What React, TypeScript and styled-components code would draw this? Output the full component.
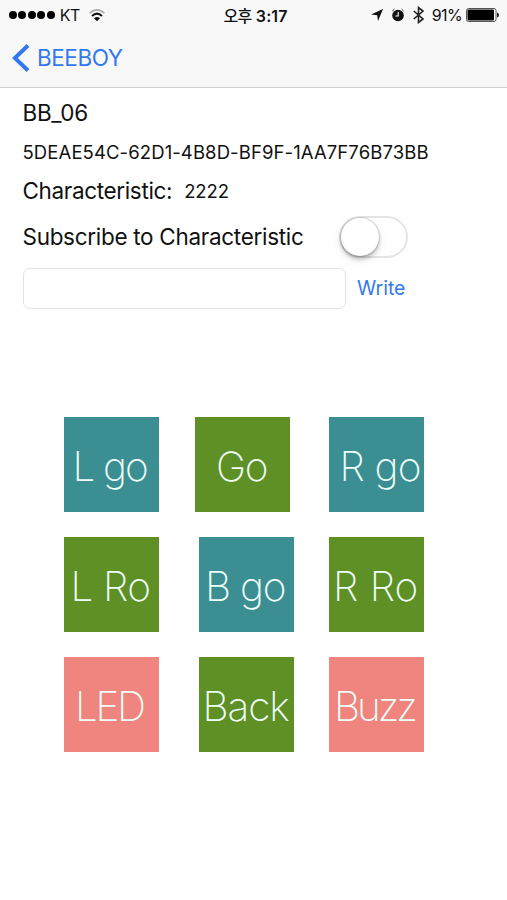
import React from 'react';
import styled, { createGlobalStyle } from 'styled-components';

const Global = createGlobalStyle`
  * { box-sizing: border-box; }
  body { margin: 0; background: #fff; font-family: Inter, "Noto Sans CJK KR", sans-serif; color: #111; }
`;
const Screen = styled.div`
  width: 507px;
  height: 900px;
  background: #fff;
  overflow: hidden;
`;
const Header = styled.header`
  height: 88px;
  background: #f8f8f8;
  border-bottom: 1px solid #cfcfcf;
`;
const StatusBar = styled.div`
  height: 30px;
  padding: 0 8px 0 9px;
  display: grid;
  grid-template-columns: 1fr auto 1fr;
  align-items: center;
  font-size: 16px;
`;
const StatusGroup = styled.div<{ $end?: boolean }>`
  display: flex;
  align-items: center;
  justify-content: ${p => (p.$end ? 'flex-end' : 'flex-start')};
`;
const Dots = styled.div`
  display: flex;
  gap: 1.6px;
  margin-right: 5px;
`;
const Dot = styled.span`
  width: 7.9px;
  height: 7.9px;
  border-radius: 50%;
  background: #000;
`;
const Carrier = styled.span`
  letter-spacing: -0.5px;
  margin-right: 9px;
`;
const Clock = styled.div`
  font-weight: 600;
  letter-spacing: 0.1px;
  margin-left: 3px;
  white-space: nowrap;
`;
const Korean = styled.span`
  font-size: 16px;
  font-weight: 500;
  letter-spacing: -0.6px;
`;
const Battery = styled.span`
  letter-spacing: -0.6px;
  margin: 0 4px 0 8px;
`;
const Icon = styled.svg<{ $gap?: number }>`
  display: block;
  flex: none;
  margin-left: ${p => p.$gap ?? 0}px;
`;
const BackLink = styled.div`
  height: 56px;
  display: flex;
  align-items: center;
  padding-left: 12px;
  gap: 7px;
  color: #3478f0;
  font-size: 22.5px;
  letter-spacing: -0.45px;
`;
const BackText = styled.span`
  padding-bottom: 1px;
`;
const Details = styled.section`
  padding: 5px 0 0 22.5px;
`;
const Row = styled.div<{ $h: number }>`
  height: ${p => p.$h}px;
  display: flex;
  align-items: center;
  white-space: nowrap;
`;
const Label = styled.span<{ $size: number; $track: number; $ml?: number }>`
  font-size: ${p => p.$size}px;
  letter-spacing: ${p => p.$track}px;
  margin-left: ${p => p.$ml ?? 0}px;
`;
const Switch = styled.div`
  width: 69px;
  height: 42px;
  margin-left: auto;
  margin-right: 99px;
  border: 2px solid #e5e5e5;
  border-radius: 21px;
`;
const Knob = styled.div`
  width: 38px;
  height: 38px;
  border-radius: 50%;
  background: #fff;
  box-shadow: 0 0 1px 1px rgba(0,0,0,.12), 0 3px 4px rgba(0,0,0,.25), 0 4px 12px rgba(0,0,0,.08);
`;
const Field = styled.input`
  width: 323px;
  height: 41px;
  border: 1.5px solid #e3e3e3;
  border-radius: 7px;
  background: #fff;
  outline: none;
`;
const WriteButton = styled.button`
  border: 0;
  padding: 0 0 1px;
  margin-left: 11.5px;
  background: none;
  color: #3478f0;
  font: 400 19.5px Inter, sans-serif;
  letter-spacing: 0;
`;
const Pad = styled.main`
  display: flex;
  flex-direction: column;
  gap: 25.5px;
  padding: 103.4px 0 0 64px;
`;
const PadRow = styled.div<{ $first: number; $second: number }>`
  display: grid;
  grid-template-columns: ${p => 95 + p.$first}px ${p => 95 + p.$second}px 95px;
`;
const tones = { teal: '#3b8e91', green: '#5e9026', coral: '#f0857f' };
const Tile = styled.button<{ $tone: keyof typeof tones; $inset: number; $track: number }>`
  width: 94.5px;
  height: 94.5px;
  border: 0;
  padding: 4px 0 0 ${p => p.$inset}px;
  background: ${p => tones[p.$tone]};
  color: #eefff8;
  font: 200 40.5px Inter, sans-serif;
  letter-spacing: ${p => p.$track}px;
  text-align: left;
  white-space: nowrap;
`;

type Key = { text: string; tone: keyof typeof tones; inset: number; track: number };
const rows: { first: number; second: number; keys: Key[] }[] = [
  { first: 36, second: 39, keys: [
    { text: 'L go', tone: 'teal', inset: 8.5, track: -1.9 },
    { text: 'Go', tone: 'green', inset: 21, track: -1.3 },
    { text: 'R go', tone: 'teal', inset: 10.5, track: -0.8 },
  ] },
  { first: 40, second: 35, keys: [
    { text: 'L Ro', tone: 'green', inset: 6.5, track: -0.8 },
    { text: 'B go', tone: 'teal', inset: 6, track: -1.2 },
    { text: 'R Ro', tone: 'green', inset: 4, track: 0 },
  ] },
  { first: 40, second: 35, keys: [
    { text: 'LED', tone: 'coral', inset: 11, track: -2.3 },
    { text: 'Back', tone: 'green', inset: 3.5, track: -1.1 },
    { text: 'Buzz', tone: 'coral', inset: 5, track: -3.1 },
  ] },
];

export default function App() {
  return (
    <Screen>
      <Global />
      <Header>
        <StatusBar>
          <StatusGroup>
            <Dots>{[0, 1, 2, 3, 4].map(i => <Dot key={i} />)}</Dots>
            <Carrier>KT</Carrier>
            <Icon width="16" height="13" viewBox="0 0 16 13" fill="none" strokeWidth="1.8">
              <path d="M.7 4.2Q8-2.4 15.3 4.2" stroke="#aaa" />
              <path d="M3 6.9Q8 2.4 13 6.9" stroke="#111" strokeWidth="2" />
              <path d="M5 9.2Q8 6.8 11 9.2L8 12.2Z" fill="#111" />
            </Icon>
          </StatusGroup>
          <Clock><Korean>오후</Korean> 3:17</Clock>
          <StatusGroup $end>
            <Icon width="12" height="12" viewBox="0 0 12 12"><path d="M12 0 7 12 6.2 6.2 0 5.4Z" fill="#111" /></Icon>
            <Icon $gap={8} width="14" height="14" viewBox="0 0 14 14" fill="none">
              <circle cx="7" cy="7.5" r="5.8" fill="#111" />
              <path d="M7.2 4v4H4.4" stroke="#fff" strokeWidth="1.1" />
              <path d="M1.3 3.1 3.5 1M12.7 3.1 10.5 1" stroke="#444" strokeWidth="1" />
            </Icon>
            <Icon $gap={8} width="11" height="18" viewBox="0 0 11 18" fill="none"><path d="M.8 5 10 13 5.5 16.5V1.5L10 5 .8 13" stroke="#222" strokeWidth="1.6" /></Icon>
            <Battery>91%</Battery>
            <Icon width="33" height="14" viewBox="0 0 33 14">
              <rect x=".5" y=".5" width="29.5" height="13" rx="2" fill="#fff" stroke="#555" />
              <rect x="1.5" y="1.5" width="26.5" height="11" rx="1" fill="#000" />
              <path d="M31 4.5Q33 5 33 7T31 9.5Z" fill="#222" />
            </Icon>
          </StatusGroup>
        </StatusBar>
        <BackLink>
          <Icon width="18" height="28" viewBox="0 0 18 28" fill="none"><path d="M16 1.5 2.8 14 16 26.5" stroke="currentColor" strokeWidth="4" /></Icon>
          <BackText>BEEBOY</BackText>
        </BackLink>
      </Header>
      <Details>
        <Row $h={39}><Label $size={22.5} $track={-0.3}>BB_06</Label></Row>
        <Row $h={39}><Label $size={18.5} $track={0.1}>5DEAE54C-62D1-4B8D-BF9F-1AA7F76B73BB</Label></Row>
        <Row $h={39}>
          <Label $size={22.5} $track={-0.35}>Characteristic:</Label>
          <Label $size={18.5} $track={-0.1} $ml={12}>2222</Label>
        </Row>
        <Row $h={53}>
          <Label $size={22.5} $track={-0.3}>Subscribe to Characteristic</Label>
          <Switch><Knob /></Switch>
        </Row>
        <Row $h={51}><Field aria-label="Value" /><WriteButton>Write</WriteButton></Row>
      </Details>
      <Pad>
        {rows.map((row, i) => (
          <PadRow key={i} $first={row.first} $second={row.second}>
            {row.keys.map(k => <Tile key={k.text} $tone={k.tone} $inset={k.inset} $track={k.track}>{k.text}</Tile>)}
          </PadRow>
        ))}
      </Pad>
    </Screen>
  );
}
